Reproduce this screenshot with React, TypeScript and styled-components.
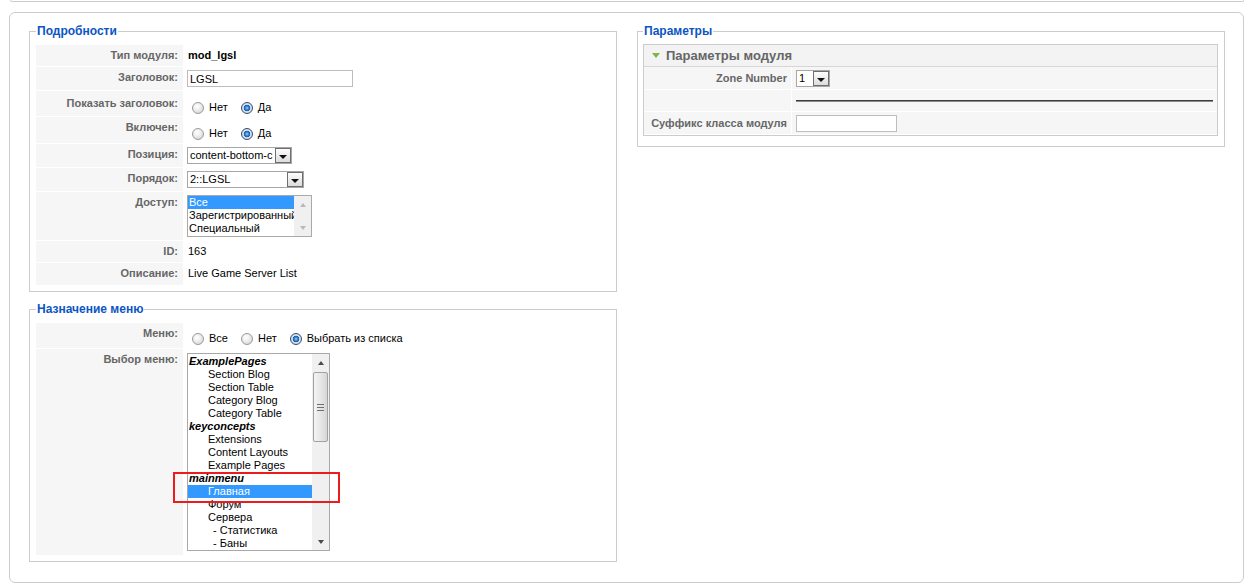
import styled, { createGlobalStyle } from "styled-components";

const GlobalStyle = createGlobalStyle`
  body {
    margin: 0;
    background: #fff;
    color: #000;
    font-family: "Liberation Sans", Arial, sans-serif;
    font-size: 11px;
  }
  * { box-sizing: border-box; }
`;

type Opt = { text: string; level?: number; group?: boolean; selected?: boolean };

const accessOptions: Opt[] = [
  { text: "Все", selected: true },
  { text: "Зарегистрированный" },
  { text: "Специальный" },
];

const menuOptions: Opt[] = [
  { text: "ExamplePages", group: true },
  { text: "Section Blog", level: 1 },
  { text: "Section Table", level: 1 },
  { text: "Category Blog", level: 1 },
  { text: "Category Table", level: 1 },
  { text: "keyconcepts", group: true },
  { text: "Extensions", level: 1 },
  { text: "Content Layouts", level: 1 },
  { text: "Example Pages", level: 1 },
];

const mainMenu: Opt[] = [
  { text: "mainmenu", group: true },
  { text: "Главная", level: 1, selected: true },
];

const menuRest: Opt[] = [
  { text: "Форум", level: 1 },
  { text: "Сервера", level: 1 },
  { text: "- Статистика", level: 2 },
  { text: "- Баны", level: 2 },
];

function Radios({ items, checked, pt }: { items: string[]; checked: number; pt?: number }) {
  return (
    <RadioGroup $pt={pt ?? 7}>
      {items.map((t, i) => (
        <RadioLabel key={t}>
          <Radio type="radio" readOnly checked={i === checked} />
          {t}
        </RadioLabel>
      ))}
    </RadioGroup>
  );
}

function FakeSelect({ value, width }: { value: string; width: number }) {
  return (
    <SelectBox $w={width}>
      <SelectText>{value}</SelectText>
      <SelectButton />
    </SelectBox>
  );
}

function Options({ list }: { list: Opt[] }) {
  return (
    <>
      {list.map((o) => (
        <Option key={o.text} $level={o.level ?? 0} $group={!!o.group} $selected={!!o.selected}>
          {o.text}
        </Option>
      ))}
    </>
  );
}

export default function App() {
  return (
    <>
      <GlobalStyle />
      <TopStrip />
      <Panel>
        <Column>
          <Fieldset>
            <Legend>Подробности</Legend>
            <FormList>
              <Row $h={21}>
                <Key>Тип модуля:</Key>
                <Value>
                  <Text $bold>mod_lgsl</Text>
                </Value>
              </Row>
              <Row $h={23}>
                <Key>Заголовок:</Key>
                <Value>
                  <TextInput $w={166} defaultValue="LGSL" />
                </Value>
              </Row>
              <Row $h={25}>
                <Key $pt={6}>Показать заголовок:</Key>
                <Value>
                  <Radios items={["Нет", "Да"]} checked={1} />
                </Value>
              </Row>
              <Row $h={26}>
                <Key>Включен:</Key>
                <Value>
                  <Radios items={["Нет", "Да"]} checked={1} />
                </Value>
              </Row>
              <Row $h={23}>
                <Key>Позиция:</Key>
                <Value>
                  <FakeSelect value="content-bottom-c" width={105} />
                </Value>
              </Row>
              <Row $h={23}>
                <Key>Порядок:</Key>
                <Value>
                  <FakeSelect value="2::LGSL" width={117} />
                </Value>
              </Row>
              <Row $h={48}>
                <Key>Доступ:</Key>
                <Value>
                  <Listbox $w={125} $h={42}>
                    <OptionList>
                      <Options list={accessOptions} />
                    </OptionList>
                    <Scrollbar>
                      <ScrollArrow $dir="up" $off />
                      <ScrollArrow $dir="down" $off />
                    </Scrollbar>
                  </Listbox>
                </Value>
              </Row>
              <Row $h={21}>
                <Key>ID:</Key>
                <Value>
                  <Text>163</Text>
                </Value>
              </Row>
              <Row $h={22}>
                <Key>Описание:</Key>
                <Value>
                  <Text>Live Game Server List</Text>
                </Value>
              </Row>
            </FormList>
          </Fieldset>

          <Fieldset>
            <Legend>Назначение меню</Legend>
            <FormList>
              <Row $h={25}>
                <Key>Меню:</Key>
                <Value>
                  <Radios items={["Все", "Нет", "Выбрать из списка"]} checked={2} pt={6} />
                </Value>
              </Row>
              <Row $h={206}>
                <Key>Выбор меню:</Key>
                <Value $pt={4}>
                  <Listbox $w={143} $h={198}>
                    <OptionList $pt={1}>
                      <Options list={menuOptions} />
                      <Highlight>
                        <Options list={mainMenu} />
                      </Highlight>
                      <Options list={menuRest} />
                    </OptionList>
                    <Scrollbar>
                      <ScrollArrow $dir="up" />
                      <Track>
                        <Thumb>
                          <Grip />
                        </Thumb>
                      </Track>
                      <ScrollArrow $dir="down" />
                    </Scrollbar>
                  </Listbox>
                </Value>
              </Row>
            </FormList>
          </Fieldset>
        </Column>

        <Column>
          <ParamsFieldset>
            <Legend>Параметры</Legend>
            <ParamPanel>
              <PanelTitle>
                <Toggle />
                Параметры модуля
              </PanelTitle>
              <ParamRows>
                <ParamRow $h={22}>
                  <ParamKey>Zone Number</ParamKey>
                  <ParamValue>
                    <FakeSelect value="1" width={34} />
                  </ParamValue>
                </ParamRow>
                <ParamRow $h={21}>
                  <ParamKey />
                  <ParamValue>
                    <Rule />
                  </ParamValue>
                </ParamRow>
                <ParamRow $h={22}>
                  <ParamKey>Суффикс класса модуля</ParamKey>
                  <ParamValue>
                    <TextInput $w={101} defaultValue="" />
                  </ParamValue>
                </ParamRow>
              </ParamRows>
            </ParamPanel>
          </ParamsFieldset>
        </Column>
      </Panel>
    </>
  );
}

const TopStrip = styled.div`
  height: 2px;
  margin: 0 4px 0 10px;
  border: 1px solid #ccc;
  border-top: none;
  border-radius: 0 0 5px 5px;
`;

const Panel = styled.div`
  margin: 10px 4px 0 9px;
  border: 1px solid #ccc;
  border-radius: 6px;
  padding: 11px 18px 20px 19px;
  display: grid;
  grid-template-columns: 1fr 1fr;
  column-gap: 20px;
  align-items: start;
`;

const Column = styled.div`
  display: flex;
  flex-direction: column;
  gap: 10px;
  min-width: 0;
`;

const Fieldset = styled.fieldset`
  margin: 0;
  min-width: 0;
  border: 1px solid #ccc;
  padding: 6px 6px 5px 6px;
`;

const ParamsFieldset = styled(Fieldset)`
  padding: 6px 6px 10px 5px;
`;

const Legend = styled.legend`
  padding: 0 1px;
  color: #0b55c4;
  font-size: 12px;
  line-height: 14px;
  font-weight: bold;
`;

const FormList = styled.div`
  display: flex;
  flex-direction: column;
  gap: 1px;
  padding: 1px 0;
`;

const Row = styled.div<{ $h: number }>`
  display: grid;
  grid-template-columns: 147px 1fr;
  column-gap: 1px;
  height: ${(p) => p.$h}px;
`;

const Key = styled.div<{ $pt?: number }>`
  background: #f6f6f6;
  text-align: right;
  padding: ${(p) => p.$pt ?? 4}px 5px 0 0;
  color: #666;
  font-weight: bold;
  line-height: 13px;
  white-space: nowrap;
`;

const Value = styled.div<{ $pt?: number }>`
  padding: ${(p) => p.$pt ?? 3}px 0 0 3px;
  line-height: 13px;
`;

const Text = styled.div<{ $bold?: boolean }>`
  padding: 1px 0 0 1px;
  font-weight: ${(p) => (p.$bold ? "bold" : "normal")};
`;

const TextInput = styled.input<{ $w: number }>`
  display: block;
  width: ${(p) => p.$w}px;
  height: 17px;
  margin: 0;
  padding: 0 2px;
  border: 1px solid #bdbdbd;
  background: #fff;
  font-family: "Liberation Sans", Arial, sans-serif;
  font-size: 11px;
  color: #000;
  outline: none;
`;

const RadioGroup = styled.div<{ $pt: number }>`
  display: flex;
  align-items: center;
  padding-top: ${(p) => p.$pt}px;
  height: 13px;
  box-sizing: content-box;
`;

const RadioLabel = styled.label`
  display: flex;
  align-items: center;
  margin-right: 8px;
  white-space: nowrap;
`;

const Radio = styled.input`
  appearance: none;
  width: 12px;
  height: 12px;
  margin: 0 5px 0 5px;
  border-radius: 50%;
  border: 1px solid #9a9a9a;
  background: radial-gradient(circle at 40% 35%, #ffffff 0, #f1f1f1 35%, #cdcdcd 100%);

  &:checked {
    border-color: #2d4f78;
    background: radial-gradient(
      circle at 50% 50%,
      #9fd0ff 0,
      #3b8fe0 1.5px,
      #1a5aa3 3px,
      #dfe3e8 3.6px,
      #c9ccd0 100%
    );
  }
`;

const SelectBox = styled.div<{ $w: number }>`
  display: flex;
  align-items: stretch;
  width: ${(p) => p.$w}px;
  height: 17px;
  border: 1px solid #a7a7a7;
  background: #fff;
`;

const SelectText = styled.div`
  flex: 1;
  padding-left: 2px;
  line-height: 15px;
  white-space: nowrap;
  overflow: hidden;
`;

const SelectButton = styled.div`
  width: 16px;
  border: 1px solid #6f6f6f;
  background: linear-gradient(#fdfdfd, #dcdcdc);
  display: flex;
  align-items: center;
  justify-content: center;

  &::before {
    content: "";
    margin-top: 3px;
    border-left: 4px solid transparent;
    border-right: 4px solid transparent;
    border-top: 4px solid #111;
  }
`;

const Listbox = styled.div<{ $w: number; $h: number }>`
  display: flex;
  width: ${(p) => p.$w}px;
  height: ${(p) => p.$h}px;
  border: 1px solid #a9a9a9;
  background: #fff;
`;

const OptionList = styled.div<{ $pt?: number }>`
  flex: 1;
  min-width: 0;
  padding-top: ${(p) => p.$pt ?? 0}px;
`;

const Option = styled.div<{ $level: number; $group: boolean; $selected: boolean }>`
  height: 13px;
  line-height: 13px;
  white-space: nowrap;
  padding-left: ${(p) => (p.$level === 2 ? 25 : p.$level === 1 ? 20 : 1)}px;
  font-weight: ${(p) => (p.$group ? "bold" : "normal")};
  font-style: ${(p) => (p.$group ? "italic" : "normal")};
  background: ${(p) => (p.$selected ? "#3399ff" : "transparent")};
  color: ${(p) => (p.$selected ? "#fff" : "#000")};
`;

const Highlight = styled.div`
  position: relative;

  &::after {
    content: "";
    position: absolute;
    top: 0;
    bottom: -5px;
    left: -15px;
    right: -28px;
    border: 2px solid #ec1c1c;
    z-index: 2;
    pointer-events: none;
  }
`;

const Scrollbar = styled.div`
  width: 17px;
  background: #f0f0f0;
  display: flex;
  flex-direction: column;
  justify-content: space-between;
`;

const ScrollArrow = styled.div<{ $dir: "up" | "down"; $off?: boolean }>`
  height: 17px;
  display: flex;
  align-items: center;
  justify-content: center;
  flex-shrink: 0;

  &::before {
    content: "";
    border-left: 3.5px solid transparent;
    border-right: 3.5px solid transparent;
    ${(p) => (p.$dir === "up" ? "border-bottom" : "border-top")}: 4px solid
      ${(p) => (p.$off ? "#b9b9b9" : "#4a4a4a")};
  }
`;

const Track = styled.div`
  flex: 1;
  padding: 1px 1px 0;
`;

const Thumb = styled.div`
  height: 70px;
  border: 1px solid #a2a2a2;
  border-radius: 2px;
  background: linear-gradient(to right, #f4f4f4, #e4e4e4 60%, #d6d6d6);
  display: flex;
  align-items: center;
  justify-content: center;
`;

const Grip = styled.div`
  width: 7px;
  height: 7px;
  background: repeating-linear-gradient(#6f6f6f 0 1px, transparent 1px 3px);
`;

const ParamPanel = styled.div`
  border: 1px solid #ccc;
  background: #fff;
`;

const PanelTitle = styled.div`
  height: 22px;
  display: flex;
  align-items: center;
  gap: 6px;
  padding-left: 8px;
  background: #f3f3f3;
  border-bottom: 1px solid #d6d6d6;
  color: #666;
  font-size: 13px;
  font-weight: bold;
`;

const Toggle = styled.span`
  width: 0;
  height: 0;
  border-left: 4px solid transparent;
  border-right: 4px solid transparent;
  border-top: 5px solid #7bb648;
`;

const ParamRows = styled.div`
  display: flex;
  flex-direction: column;
  gap: 1px;
  padding-bottom: 1px;
`;

const ParamRow = styled.div<{ $h: number }>`
  display: grid;
  grid-template-columns: 147px 1fr;
  column-gap: 1px;
  height: ${(p) => p.$h}px;
`;

const ParamKey = styled.div`
  background: #f6f6f6;
  display: flex;
  align-items: center;
  justify-content: flex-end;
  padding-right: 4px;
  color: #666;
  font-weight: bold;
  white-space: nowrap;
`;

const ParamValue = styled.div`
  background: #f6f6f6;
  display: flex;
  align-items: center;
  padding: 0 4px;
`;

const Rule = styled.div`
  flex: 1;
  border-top: 1px solid #3c3c3c;
  border-bottom: 1px solid #8a8a8a;
`;
